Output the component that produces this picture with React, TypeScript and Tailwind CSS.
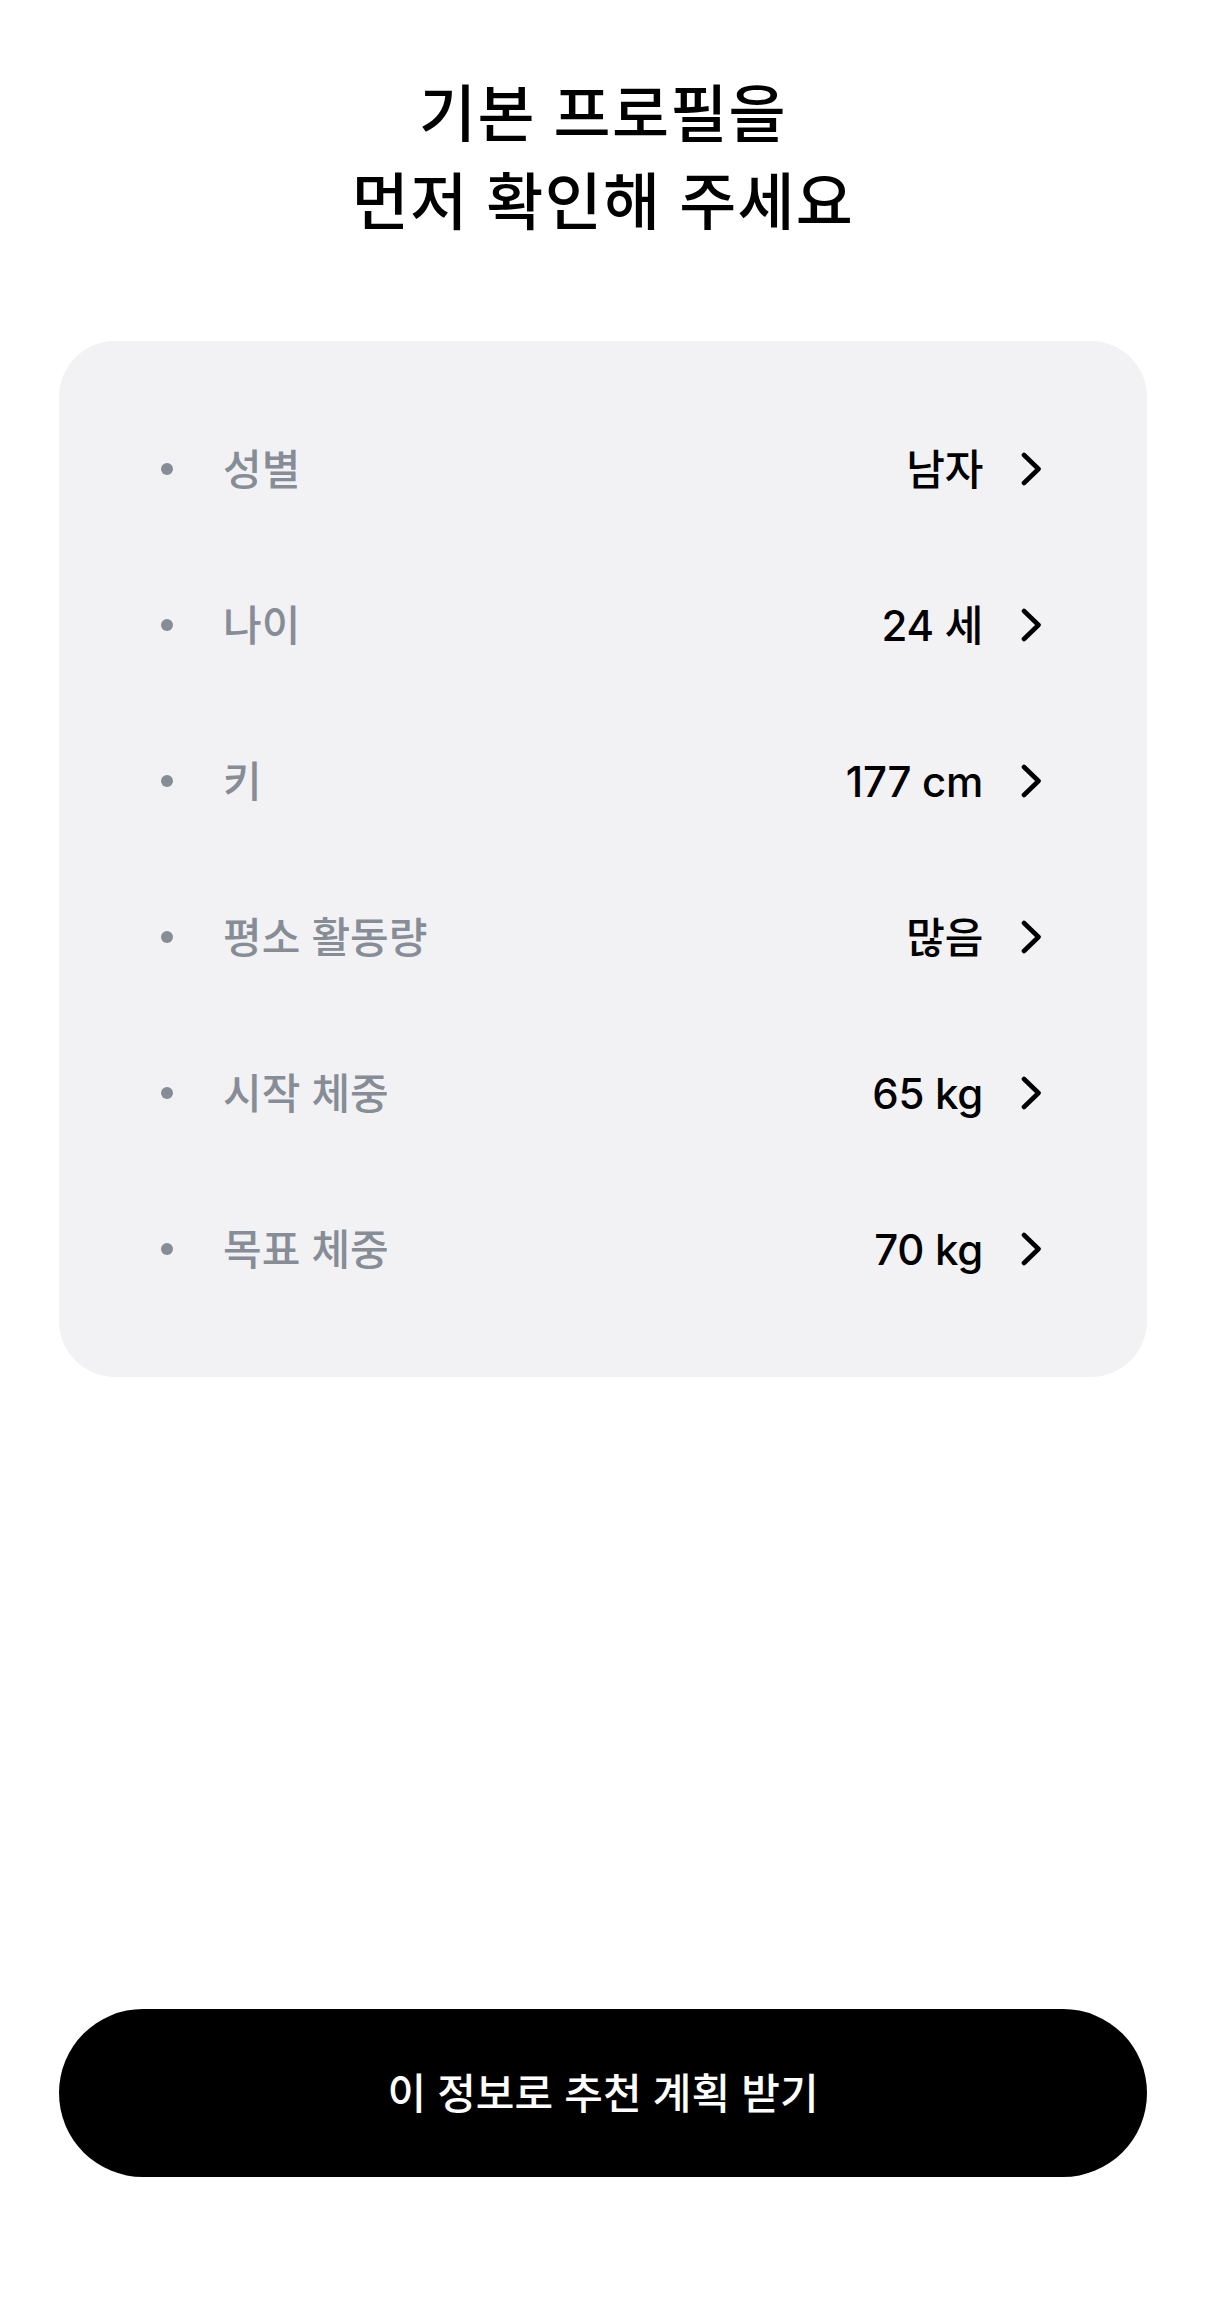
const rows = [
  { label: '성별', value: '남자' },
  { label: '나이', value: '24 세' },
  { label: '키', value: '177 cm' },
  { label: '평소 활동량', value: '많음' },
  { label: '시작 체중', value: '65 kg' },
  { label: '목표 체중', value: '70 kg' },
];

const font = { fontFamily: '"Inter", "Noto Sans CJK KR", sans-serif' };

function Chevron() {
  return (
    <svg width="26" height="34" viewBox="0 0 26 34" fill="none" className="shrink-0">
      <path d="M5 3 L19.5 17 L5 31" stroke="#000" strokeWidth="4.6" strokeLinecap="round" strokeLinejoin="round" />
    </svg>
  );
}

export default function App() {
  return (
    <div className="min-h-screen bg-white flex flex-col px-[59px]" style={font}>
      <h1 className="pt-[71px] text-center text-[62px] leading-[88px] font-medium text-black tracking-[1.3px]">
        기본 프로필을
        <br />
        먼저 확인해 주세요
      </h1>

      <div className="mt-[94px] bg-[#f2f2f4] rounded-[56px] py-[50px] pl-[102px] pr-[102px]">
        {rows.map((row) => (
          <div key={row.label} className="h-[156px] flex items-center">
            <div className="w-[12px] h-[12px] rounded-full bg-[#878d96] shrink-0" />
            <div className="ml-[50px] flex-1 text-[42px] font-medium text-[#878d96]">{row.label}</div>
            <div className="text-[42px] font-medium text-black tracking-[-0.3px]">{row.value}</div>
            <div className="ml-[36px]">
              <Chevron />
            </div>
          </div>
        ))}
      </div>

      <div className="flex-1" />

      <div className="pb-[138px]">
        <button className="w-full h-[168px] rounded-full bg-black text-white text-[42px] font-medium">
          이 정보로 추천 계획 받기
        </button>
      </div>
    </div>
  );
}
